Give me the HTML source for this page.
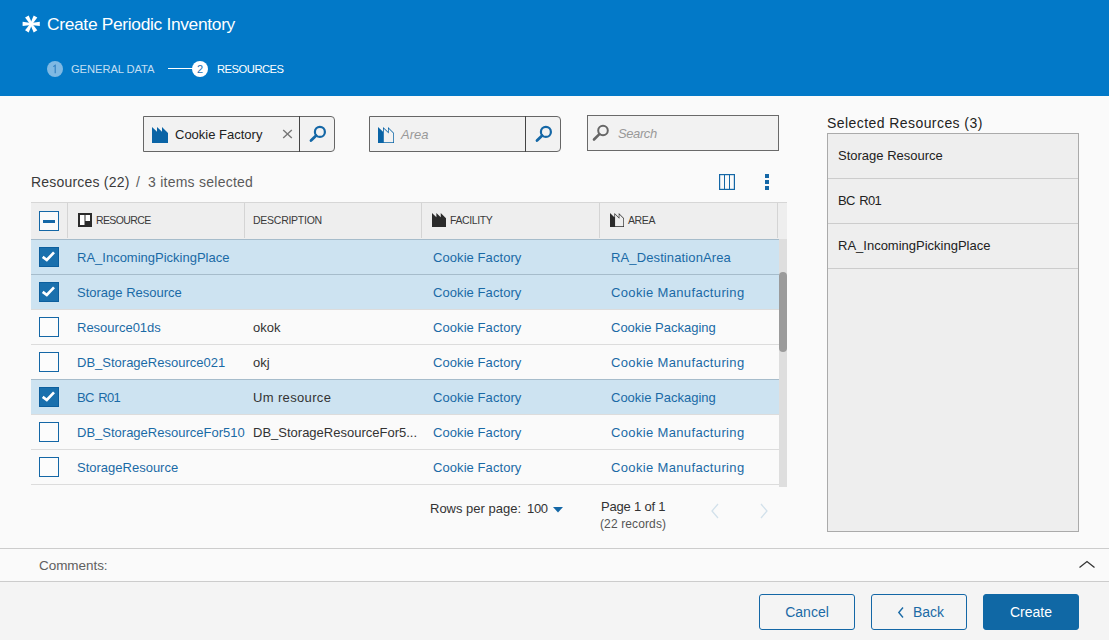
<!DOCTYPE html>
<html><head><meta charset="utf-8">
<style>
*{box-sizing:border-box;margin:0;padding:0}
html,body{width:1109px;height:640px;overflow:hidden;background:#fafafa;font-family:"Liberation Sans",sans-serif;position:relative}
.abs{position:absolute}
.t{position:absolute;white-space:nowrap;line-height:1}
#hdr{position:absolute;left:0;top:0;width:1109px;height:96px;background:#0279c8}
.circ{position:absolute;width:16px;height:16px;border-radius:50%;font-size:11px;line-height:16px;text-align:center}
.fbox{position:absolute;height:36px;background:#f2f2f2;border:1px solid #666}
.tbl{position:absolute;left:31px;top:202px;width:756px}
.row{position:absolute;left:31px;width:748px;height:35px;border-bottom:1px solid #dcdcdc;background:#fafafa}
.row.sel{background:#cde3f1}
.row.sel::before{content:"";position:absolute;left:0;right:0;top:-1px;height:1px;background:#a6bccb}
.cb{position:absolute;left:8px;top:7px;width:20px;height:20px;border:1px solid #1467a6;background:#fcfcfc}
.cb.on{background:#1a70ad;border-color:#0c5f9e}
.cell{position:absolute;top:0;line-height:35px;font-size:13px;white-space:nowrap}
.lnk{color:#1a6aa6}
.dsc{color:#333}
.btn{position:absolute;top:594px;width:96px;height:36px;border:1px solid #1467a6;border-radius:3px;font-size:14px;line-height:34px;text-align:center;color:#1a6aa6;background:#f4f4f4}
.hd{font-size:10.5px;color:#3a3a3a}
.item{position:absolute;left:0;width:250px;height:45px;border-bottom:1px solid #cccccc;font-size:13px;color:#222;line-height:43px;padding-left:10px}
</style></head><body>
<div id="hdr">
  <svg class="abs" style="left:13px;top:14px" width="36" height="20" viewBox="0 0 36 20"><g fill="#fff" transform="translate(18.2,9.9)"><polygon points="0,-1 8.6,-2.1 8.6,2.1 0,1" transform="rotate(0)"/><polygon points="0,-1 8.6,-2.1 8.6,2.1 0,1" transform="rotate(60)"/><polygon points="0,-1 8.6,-2.1 8.6,2.1 0,1" transform="rotate(120)"/><polygon points="0,-1 8.6,-2.1 8.6,2.1 0,1" transform="rotate(180)"/><polygon points="0,-1 8.6,-2.1 8.6,2.1 0,1" transform="rotate(240)"/><polygon points="0,-1 8.6,-2.1 8.6,2.1 0,1" transform="rotate(300)"/><circle r="1.6"/></g></svg>
  <div class="t" style="left:47px;top:16px;font-size:17.4px;color:#fff;letter-spacing:-0.33px">Create Periodic Inventory</div>
  <div class="circ" style="left:47px;top:61px;background:#7fb9e3"><svg class="abs" style="left:0;top:0" width="16" height="16" viewBox="0 0 16 16"><path d="M6.3,5.6 L8.2,4.3 L8.2,12.2" fill="none" stroke="#2f7fc0" stroke-width="1.1"/></svg></div>
  <div class="t" style="left:71px;top:64px;font-size:11.2px;color:#c3def2;letter-spacing:-0.08px">GENERAL DATA</div>
  <div class="abs" style="left:168px;top:68px;width:26px;height:1px;background:#fff"></div>
  <div class="circ" style="left:192px;top:61px;background:#fff;color:#1d6fb0">2</div>
  <div class="t" style="left:217px;top:64px;font-size:11.2px;color:#fff;letter-spacing:-0.48px">RESOURCES</div>
</div>

<!-- filters -->
<div class="fbox" style="left:143px;top:116px;width:192px;border-radius:0 4px 4px 0"></div>
<div class="abs" style="left:299px;top:116px;width:1px;height:36px;background:#444"></div>
<svg class="abs" style="left:152px;top:127px" width="16" height="16" viewBox="0 0 16 16"><path d="M0,0 L5,4.8 L5,0 L10,4.8 L10,0 L16,6 L16,16 L0,16 Z" fill="#0a64a6"/></svg>
<svg class="abs" style="left:304px;top:120px" width="28" height="28" viewBox="0 0 28 28"><circle cx="15.9" cy="11.9" r="5" fill="none" stroke="#1467a6" stroke-width="2.2"/><line x1="12.2" y1="15.6" x2="7" y2="20.6" stroke="#1467a6" stroke-width="2.8" stroke-linecap="round"/></svg>
<div class="t" style="left:175px;top:128px;font-size:13px;color:#222">Cookie Factory</div>
<svg class="abs" style="left:282px;top:129px" width="11" height="10" viewBox="0 0 11 10"><path d="M1.2,1 L9.8,9 M9.8,1 L1.2,9" stroke="#777" stroke-width="1.4"/></svg>

<div class="fbox" style="left:369px;top:116px;width:192px;border-radius:0 4px 4px 0"></div>
<div class="abs" style="left:525px;top:116px;width:1px;height:36px;background:#444"></div>
<svg class="abs" style="left:378px;top:127px" width="16" height="16" viewBox="0 0 16 16"><path d="M0,0 L5,4.8 L5,0 L10,4.8 L10,0 L16,6 L16,16 L0,16 Z" fill="#0a64a6"/><path d="M5.8,1.8 L10.75,6.55 L10.75,1.81 L15.25,6.31 L15.25,15.25 L5.8,15.25 Z" fill="#f2f2f2"/></svg>
<svg class="abs" style="left:530px;top:120px" width="28" height="28" viewBox="0 0 28 28"><circle cx="15.9" cy="11.9" r="5" fill="none" stroke="#1467a6" stroke-width="2.2"/><line x1="12.2" y1="15.6" x2="7" y2="20.6" stroke="#1467a6" stroke-width="2.8" stroke-linecap="round"/></svg>
<div class="t" style="left:401px;top:128px;font-size:13px;color:#999;font-style:italic">Area</div>

<div class="fbox" style="left:587px;top:115px;width:192px;border:1.5px solid #6a6a6a"></div>
<svg class="abs" style="left:588px;top:119px" width="26" height="26" viewBox="0 0 26 26"><circle cx="15" cy="11.5" r="4.8" fill="none" stroke="#666" stroke-width="2"/><line x1="11.4" y1="15.1" x2="6" y2="20.5" stroke="#666" stroke-width="2.6" stroke-linecap="round"/></svg>
<div class="t" style="left:618px;top:127px;font-size:13px;color:#999;font-style:italic;letter-spacing:-0.4px">Search</div>

<!-- title row -->
<div class="t" style="left:31px;top:175px;font-size:14px;color:#3a3a3a;letter-spacing:0.2px">Resources (22)</div>
<div class="t" style="left:136px;top:175px;font-size:14px;color:#5a5a5a">/</div>
<div class="t" style="left:148px;top:175px;font-size:14px;color:#5a5a5a;letter-spacing:0.25px">3 items selected</div>

<!-- table header -->
<div class="abs" style="left:31px;top:202px;width:756px;height:37px;background:#eeeeee;border-top:1px solid #d6d6d6"></div>
<div class="abs" style="left:31px;top:239px;width:748px;height:1px;background:#a9bdca"></div>
<div class="abs" style="left:67px;top:203px;width:1px;height:35px;background:#d4d4d4"></div>
<div class="abs" style="left:244px;top:203px;width:1px;height:35px;background:#d4d4d4"></div>
<div class="abs" style="left:421px;top:203px;width:1px;height:35px;background:#d4d4d4"></div>
<div class="abs" style="left:599px;top:203px;width:1px;height:35px;background:#d4d4d4"></div>
<div class="abs" style="left:777px;top:203px;width:1px;height:35px;background:#d4d4d4"></div>
<div class="abs" style="left:39px;top:211px;width:20px;height:20px;border:1.5px solid #1467a6;background:#fafafa"></div>
<div class="abs" style="left:43px;top:220px;width:12px;height:3px;background:#1467a6"></div>
<svg class="abs" style="left:78px;top:213px" width="14" height="14" viewBox="0 0 14 14"><rect width="14" height="14" fill="#2b2b2b"/><rect x="2" y="2" width="4.5" height="10" fill="#fff"/><rect x="7.5" y="2" width="4.5" height="6" fill="#fff"/></svg>
<div class="t hd" style="left:96px;top:215px;letter-spacing:-0.62px">RESOURCE</div>
<div class="t hd" style="left:253px;top:215px;letter-spacing:-0.26px">DESCRIPTION</div>
<svg class="abs" style="left:432px;top:213px" width="14" height="14" viewBox="0 0 16 16"><path d="M0,0 L5,4.8 L5,0 L10,4.8 L10,0 L16,6 L16,16 L0,16 Z" fill="#2b2b2b"/></svg>
<div class="t hd" style="left:450px;top:215px;letter-spacing:-0.39px">FACILITY</div>
<svg class="abs" style="left:610px;top:213px" width="14" height="14" viewBox="0 0 16 16"><path d="M0,0 L5,4.8 L5,0 L10,4.8 L10,0 L16,6 L16,16 L0,16 Z" fill="#2b2b2b"/><path d="M5.8,1.8 L10.75,6.55 L10.75,1.81 L15.25,6.31 L15.25,15.25 L5.8,15.25 Z" fill="#eee"/></svg>
<div class="t hd" style="left:628px;top:215px;letter-spacing:-0.4px">AREA</div>
<!-- scrollbar -->
<div class="abs" style="left:779px;top:239px;width:8px;height:248px;background:#dedede"></div>
<div class="abs" style="left:779px;top:272px;width:8px;height:80px;background:#9b9b9b;border-radius:4px"></div>
<!-- title row icons -->
<svg class="abs" style="left:719px;top:174px" width="16" height="16" viewBox="0 0 16 16"><rect x="0.6" y="0.6" width="14.8" height="14.8" fill="none" stroke="#1467a6" stroke-width="1.2"/><line x1="5.5" y1="1" x2="5.5" y2="15" stroke="#1467a6" stroke-width="1"/><line x1="10.5" y1="1" x2="10.5" y2="15" stroke="#1467a6" stroke-width="1"/></svg>
<div class="abs" style="left:765px;top:174px;width:4px;height:4px;background:#1467a6"></div>
<div class="abs" style="left:765px;top:180px;width:4px;height:4px;background:#1467a6"></div>
<div class="abs" style="left:765px;top:186px;width:4px;height:4px;background:#1467a6"></div>
<!-- pager -->
<div class="t" style="left:430px;top:502px;font-size:13px;color:#333">Rows per page:</div>
<div class="t" style="left:527px;top:502px;font-size:13px;color:#333;letter-spacing:-0.3px">100</div>
<svg class="abs" style="left:553px;top:507px" width="10" height="6" viewBox="0 0 10 6"><path d="M0,0 L10,0 L5,5.5 Z" fill="#1467a6"/></svg>
<div class="t" style="left:601px;top:500px;font-size:13px;color:#333;letter-spacing:-0.2px">Page 1 of 1</div>
<div class="t" style="left:600px;top:518px;font-size:12px;color:#555;letter-spacing:0.12px">(22 records)</div>
<svg class="abs" style="left:708px;top:502px" width="14" height="18" viewBox="0 0 14 18"><path d="M10,2 L4,9 L10,16" fill="none" stroke="#d2e1eb" stroke-width="1.3"/></svg>
<svg class="abs" style="left:757px;top:502px" width="14" height="18" viewBox="0 0 14 18"><path d="M4,2 L10,9 L4,16" fill="none" stroke="#d2e1eb" stroke-width="1.3"/></svg>


<!-- rows -->
<div class="row sel" style="top:240px">
  <div class="cb on"><svg width="18" height="18" viewBox="0 0 18 18" style="position:absolute;left:0;top:0"><path d="M2.7 8.9 L6.8 12.0 L14 4.4" fill="none" stroke="#fff" stroke-width="2.7"/></svg></div>
  <div class="cell lnk" style="left:46px">RA_IncomingPickingPlace</div>
  <div class="cell lnk" style="left:402px;letter-spacing:0.07px">Cookie Factory</div>
  <div class="cell lnk" style="left:580px;letter-spacing:0.12px">RA_DestinationArea</div>
</div>
<div class="row sel" style="top:275px">
  <div class="cb on"><svg width="18" height="18" viewBox="0 0 18 18" style="position:absolute;left:0;top:0"><path d="M2.7 8.9 L6.8 12.0 L14 4.4" fill="none" stroke="#fff" stroke-width="2.7"/></svg></div>
  <div class="cell lnk" style="left:46px">Storage Resource</div>
  <div class="cell lnk" style="left:402px;letter-spacing:0.07px">Cookie Factory</div>
  <div class="cell lnk" style="left:580px;letter-spacing:0.35px">Cookie Manufacturing</div>
</div>
<div class="row" style="top:310px">
  <div class="cb"></div>
  <div class="cell lnk" style="left:46px">Resource01ds</div>
  <div class="cell dsc" style="left:222px">okok</div>
  <div class="cell lnk" style="left:402px;letter-spacing:0.07px">Cookie Factory</div>
  <div class="cell lnk" style="left:580px">Cookie Packaging</div>
</div>
<div class="row" style="top:345px">
  <div class="cb"></div>
  <div class="cell lnk" style="left:46px">DB_StorageResource021</div>
  <div class="cell dsc" style="left:222px">okj</div>
  <div class="cell lnk" style="left:402px;letter-spacing:0.07px">Cookie Factory</div>
  <div class="cell lnk" style="left:580px;letter-spacing:0.35px">Cookie Manufacturing</div>
</div>
<div class="row sel" style="top:380px">
  <div class="cb on"><svg width="18" height="18" viewBox="0 0 18 18" style="position:absolute;left:0;top:0"><path d="M2.7 8.9 L6.8 12.0 L14 4.4" fill="none" stroke="#fff" stroke-width="2.7"/></svg></div>
  <div class="cell lnk" style="left:46px;letter-spacing:-0.7px;word-spacing:1.8px">BC R01</div>
  <div class="cell dsc" style="left:222px;letter-spacing:0.35px">Um resource</div>
  <div class="cell lnk" style="left:402px;letter-spacing:0.07px">Cookie Factory</div>
  <div class="cell lnk" style="left:580px">Cookie Packaging</div>
</div>
<div class="row" style="top:415px">
  <div class="cb"></div>
  <div class="cell lnk" style="left:46px">DB_StorageResourceFor510</div>
  <div class="cell dsc" style="left:222px">DB_StorageResourceFor5...</div>
  <div class="cell lnk" style="left:402px;letter-spacing:0.07px">Cookie Factory</div>
  <div class="cell lnk" style="left:580px;letter-spacing:0.35px">Cookie Manufacturing</div>
</div>
<div class="row" style="top:450px">
  <div class="cb"></div>
  <div class="cell lnk" style="left:46px">StorageResource</div>
  <div class="cell lnk" style="left:402px;letter-spacing:0.07px">Cookie Factory</div>
  <div class="cell lnk" style="left:580px;letter-spacing:0.35px">Cookie Manufacturing</div>
</div>


<!-- right panel -->
<div class="t" style="left:827px;top:116px;font-size:14px;color:#222;letter-spacing:0.43px">Selected Resources (3)</div>
<div class="abs" style="left:827px;top:133px;width:252px;height:399px;background:#eeeeee;border:1px solid #aaaaaa">
  <div class="item" style="top:0">Storage Resource</div>
  <div class="item" style="top:45px;letter-spacing:-0.7px;word-spacing:1.8px">BC R01</div>
  <div class="item" style="top:90px">RA_IncomingPickingPlace</div>
</div>

<!-- comments -->
<div class="abs" style="left:0;top:548px;width:1109px;height:34px;border-top:1px solid #cccccc;border-bottom:1px solid #cccccc;background:#fafafa"></div>
<div class="t" style="left:39px;top:559px;font-size:13.5px;color:#606060;letter-spacing:-0.05px">Comments:</div>

<!-- comments chevron -->
<svg class="abs" style="left:1077px;top:558px" width="20" height="12" viewBox="0 0 20 12"><path d="M2.5,9.5 L10,3.5 L17.5,9.5" fill="none" stroke="#333" stroke-width="1.3"/></svg>
<!-- footer -->
<div class="abs" style="left:0;top:582px;width:1109px;height:58px;background:#f4f4f4"></div>
<div class="btn" style="left:759px">Cancel</div>
<div class="btn" style="left:871px;text-align:left;padding-left:41px">Back<svg class="abs" style="left:25px;top:11px" width="8" height="13" viewBox="0 0 8 13"><path d="M6,1.5 L1.8,6.5 L6,11.5" fill="none" stroke="#1a6aa6" stroke-width="1.4"/></svg></div>
<div class="btn" style="left:983px;background:#1068a5;color:#fff;border-color:#1068a5">Create</div>
</body></html>
